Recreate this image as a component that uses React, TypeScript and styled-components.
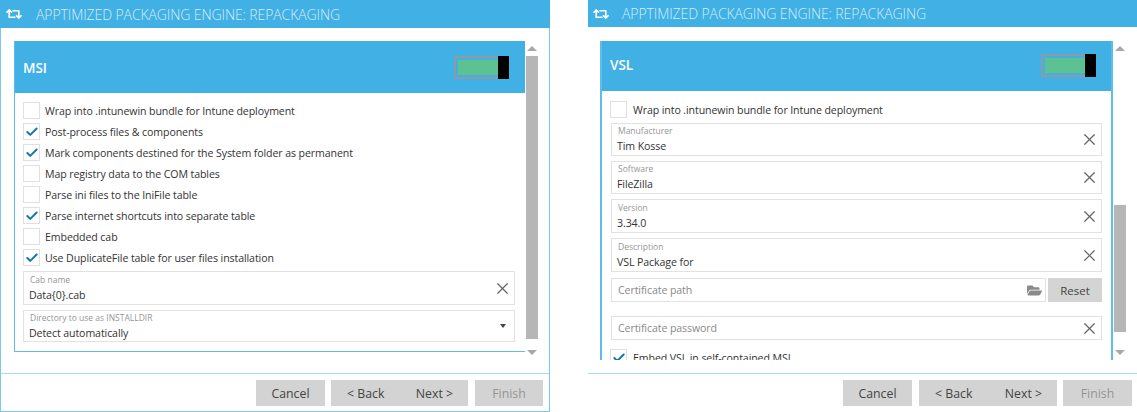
import styled, { createGlobalStyle } from 'styled-components';
import { Check, X } from 'lucide-react';
import { FaFolderOpen, FaRetweet } from 'react-icons/fa';

const BLUE = '#41b0e4';

const GlobalStyle = createGlobalStyle`
  html, body {
    margin: 0;
    background: #fff;
  }
  body {
    font-family: "Open Sans", "Noto Sans", sans-serif;
    color: #333;
  }
`;

const Page = styled.div`
  width: 1137px;
  height: 412px;
  display: flex;
  justify-content: space-between;
  overflow: hidden;
`;

const Window = styled.section<{ $framed?: boolean }>`
  box-sizing: border-box;
  width: ${(p) => (p.$framed ? '550px' : '549px')};
  height: 412px;
  display: flex;
  flex-direction: column;
  border: ${(p) => (p.$framed ? '1px solid #7cc8ec' : '0')};
  border-top: 0;
`;

const TitleBar = styled.header<{ $framed?: boolean }>`
  height: ${(p) => (p.$framed ? '28px' : '27px')};
  flex: none;
  display: flex;
  align-items: center;
  gap: ${(p) => (p.$framed ? '14px' : '13px')};
  padding-left: ${(p) => (p.$framed ? '6px' : '5px')};
  background: ${BLUE};
  color: #fff;
  box-sizing: border-box;
  margin: ${(p) => (p.$framed ? '0 -1px' : '0')};
`;

const Title = styled.h1`
  margin: 0;
  font-size: 14px;
  font-weight: 300;
  color: #d6eefa;
  letter-spacing: -0.1px;
`;

const Content = styled.div<{ $framed?: boolean }>`
  flex: 1;
  min-height: 0;
  display: flex;
  align-items: flex-start;
  padding: ${(p) => (p.$framed ? '13px 0 0 13px' : '14px 0 0 12px')};
`;

const Panel = styled.div<{ $framed?: boolean }>`
  box-sizing: border-box;
  width: ${(p) => (p.$framed ? '511px' : '513px')};
  height: ${(p) => (p.$framed ? '311px' : '319px')};
  flex: none;
  overflow: hidden;
  border: solid #5dbcea;
  border-width: ${(p) => (p.$framed ? '0 0 1px 1px' : '0 2px 0 2px')};
`;

const PanelHead = styled.div<{ $framed?: boolean }>`
  height: ${(p) => (p.$framed ? '52px' : '50px')};
  margin: 0 ${(p) => (p.$framed ? '0' : '-2px')} 0 ${(p) => (p.$framed ? '-1px' : '-2px')};
  display: flex;
  align-items: center;
  justify-content: space-between;
  padding: 0 ${(p) => (p.$framed ? '16px 0 9px' : '17px 2px 10px')};
  background: ${BLUE};
  box-sizing: border-box;
`;

const PanelName = styled.h2<{ $framed?: boolean }>`
  margin: ${(p) => (p.$framed ? '2px 0 0' : '0')};
  font-size: 13.5px;
  font-weight: 600;
  color: #fff;
`;

const Toggle = styled.div`
  display: flex;
  height: 23px;
`;

const ToggleTrack = styled.div`
  box-sizing: border-box;
  width: 44px;
  border: 2px solid #8f9ba3;
  border-right: 0;
  padding: 2px 0 2px 2px;
  display: flex;
`;

const ToggleFill = styled.div`
  flex: 1;
  background: #5cc292;
`;

const ToggleKnob = styled.div`
  width: 11px;
  background: #000;
`;

const PanelBody = styled.div<{ $framed?: boolean }>`
  display: flex;
  flex-direction: column;
  padding: ${(p) => (p.$framed ? '9px 10px 0 8px' : '10px 9px 0 9px')};
`;

const CheckRow = styled.label<{ $gap: number; $nudged?: boolean }>`
  display: flex;
  align-items: center;
  gap: ${(p) => (p.$nudged ? '6px' : '5px')};
  height: 17px;
  margin-bottom: ${(p) => p.$gap}px;
  margin-left: ${(p) => (p.$nudged ? '-1px' : '0')};
  font-size: 10.6px;
  letter-spacing: -0.1px;
  color: #333;
  white-space: nowrap;
`;

const Box = styled.span`
  box-sizing: border-box;
  width: 17px;
  height: 17px;
  flex: none;
  display: flex;
  align-items: center;
  justify-content: center;
  border: 1px solid #e0e0e0;
  color: #1577a8;
`;

const Field = styled.div<{ $height: number; $gap: number }>`
  box-sizing: border-box;
  height: ${(p) => p.$height}px;
  margin-bottom: ${(p) => p.$gap}px;
  flex: none;
  display: flex;
  align-items: center;
  justify-content: space-between;
  padding: 0 2px 0 5px;
  border: 1px solid #e2e2e2;
  min-width: 0;
`;

const FieldText = styled.div`
  display: flex;
  flex-direction: column;
  min-width: 0;
`;

const FieldLabel = styled.span`
  font-size: 8.5px;
  line-height: 13px;
  margin-left: 1px;
  color: #969696;
`;

const FieldValue = styled.span`
  font-size: 10.6px;
  letter-spacing: -0.1px;
  line-height: 18px;
  color: #333;
`;

const Placeholder = styled.span`
  font-size: 10.6px;
  letter-spacing: -0.1px;
  color: #8a8a8a;
  padding-left: 1px;
`;

const ClearIcon = styled(X)`
  flex: none;
  color: #666;
`;

const Caret = styled.span`
  width: 0;
  height: 0;
  margin-right: 6px;
  border: 3.5px solid transparent;
  border-top: 4px solid #444;
  border-bottom: 0;
`;

const CertRow = styled.div`
  display: flex;
  gap: 2px;
  margin-bottom: 14px;
`;

const CertPath = styled(Field)`
  flex: 1;
  margin-bottom: 0;
  padding-right: 3px;
  color: #8a8a8a;
`;

const ResetButton = styled.button`
  width: 54px;
  height: 24px;
  flex: none;
  padding: 0;
  border: 0;
  background: #d4d4d4;
  font: inherit;
  font-size: 11.5px;
  color: #444;
`;

const Scrollbar = styled.div`
  width: 12px;
  height: 314px;
  flex: none;
  margin-left: 1px;
  display: flex;
  flex-direction: column;
  align-items: center;
`;

const Arrow = styled.span<{ $down?: boolean }>`
  width: 0;
  height: 0;
  flex: none;
  margin-top: ${(p) => (p.$down ? 'auto' : '5px')};
  border: 5px solid transparent;
  ${(p) =>
    p.$down
      ? 'border-top: 5px solid #a8a8a8; border-bottom: 0;'
      : 'border-bottom: 5px solid #a8a8a8; border-top: 0;'}
`;

const Thumb = styled.div<{ $offset: number; $length: number }>`
  width: 100%;
  height: ${(p) => p.$length}px;
  flex: none;
  margin-top: ${(p) => p.$offset}px;
  background: #b6b6b6;
`;

const Footer = styled.footer<{ $framed?: boolean }>`
  box-sizing: border-box;
  height: ${(p) => (p.$framed ? '38px' : '39px')};
  flex: none;
  display: flex;
  justify-content: flex-end;
  padding: 6px ${(p) => (p.$framed ? '6px' : '5px')} 0 0;
  border-top: 1px solid #9edcf7;
`;

const Button = styled.button<{ $width: number; $disabled?: boolean }>`
  box-sizing: border-box;
  width: ${(p) => p.$width}px;
  height: 26px;
  padding: 0;
  border: 0;
  background: #d3d3d3;
  font: inherit;
  font-size: 12.3px;
  color: ${(p) => (p.$disabled ? '#959595' : '#444')};
`;

const StepButton = styled(Button)<{ $framed?: boolean }>`
  display: flex;
  align-items: center;
  justify-content: space-between;
  padding: 0 15px 0 16px;
  margin: 0 ${(p) => (p.$framed ? '7px 0 6px' : '6px 0 7px')};
`;

type Option = { text: string; checked: boolean };

const msiOptions: Option[] = [
  { text: 'Wrap into .intunewin bundle for Intune deployment', checked: false },
  { text: 'Post-process files & components', checked: true },
  { text: 'Mark components destined for the System folder as permanent', checked: true },
  { text: 'Map registry data to the COM tables', checked: false },
  { text: 'Parse ini files to the IniFile table', checked: false },
  { text: 'Parse internet shortcuts into separate table', checked: true },
  { text: 'Embedded cab', checked: false },
  { text: 'Use DuplicateFile table for user files installation', checked: true },
];

const vslFields = [
  { label: 'Manufacturer', value: 'Tim Kosse', height: 33 },
  { label: 'Software', value: 'FileZilla', height: 33 },
  { label: 'Version', value: '3.34.0', height: 34 },
  { label: 'Description', value: 'VSL Package for', height: 34 },
];

const CheckOption = ({
  text,
  checked,
  gap,
  nudged,
}: Option & { gap: number; nudged?: boolean }) => (
  <CheckRow $gap={gap} $nudged={nudged}>
    <Box>{checked && <Check size={14} strokeWidth={3.4} />}</Box>
    {text}
  </CheckRow>
);

const WindowBar = ({ framed }: { framed?: boolean }) => (
  <TitleBar $framed={framed}>
    <FaRetweet size={16} />
    <Title>APPTIMIZED PACKAGING ENGINE: REPACKAGING</Title>
  </TitleBar>
);

const PanelHeader = ({ name, framed }: { name: string; framed?: boolean }) => (
  <PanelHead $framed={framed}>
    <PanelName $framed={framed}>{name}</PanelName>
    <Toggle>
      <ToggleTrack>
        <ToggleFill />
      </ToggleTrack>
      <ToggleKnob />
    </Toggle>
  </PanelHead>
);

const WizardButtons = ({ framed }: { framed?: boolean }) => (
  <Footer $framed={framed}>
    <Button $width={69}>Cancel</Button>
    <StepButton $width={framed ? 137 : 138} $framed={framed}>
      <span>&lt; Back</span>
      <span>Next &gt;</span>
    </StepButton>
    <Button $width={framed ? 68 : 69} $disabled>
      Finish
    </Button>
  </Footer>
);

const App = () => {
  return (
    <Page>
      <GlobalStyle />
      <Window $framed>
        <WindowBar framed />
        <Content $framed>
          <Panel $framed>
            <PanelHeader name="MSI" framed />
            <PanelBody $framed>
              {msiOptions.map((option, i) => (
                <CheckOption key={option.text} {...option} gap={i === 7 ? 5 : 4} />
              ))}
              <Field $height={34} $gap={5}>
                <FieldText>
                  <FieldLabel>Cab name</FieldLabel>
                  <FieldValue>Data{'{0}'}.cab</FieldValue>
                </FieldText>
                <ClearIcon size={19} strokeWidth={1.5} />
              </Field>
              <Field $height={32} $gap={0}>
                <FieldText>
                  <FieldLabel>Directory to use as INSTALLDIR</FieldLabel>
                  <FieldValue>Detect automatically</FieldValue>
                </FieldText>
                <Caret />
              </Field>
            </PanelBody>
          </Panel>
          <Scrollbar>
            <Arrow />
            <Thumb $offset={5} $length={283} />
            <Arrow $down />
          </Scrollbar>
        </Content>
        <WizardButtons framed />
      </Window>

      <Window>
        <WindowBar />
        <Content>
          <Panel>
            <PanelHeader name="VSL" />
            <PanelBody>
              <CheckOption
                text="Wrap into .intunewin bundle for Intune deployment"
                checked={false}
                gap={5}
                nudged
              />
              {vslFields.map((field, i) => (
                <Field key={field.label} $height={field.height} $gap={i === 3 ? 6 : 5}>
                  <FieldText>
                    <FieldLabel>{field.label}</FieldLabel>
                    <FieldValue>{field.value}</FieldValue>
                  </FieldText>
                  <ClearIcon size={19} strokeWidth={1.5} />
                </Field>
              ))}
              <CertRow>
                <CertPath $height={24} $gap={0}>
                  <Placeholder>Certificate path</Placeholder>
                  <FaFolderOpen size={15} />
                </CertPath>
                <ResetButton>Reset</ResetButton>
              </CertRow>
              <Field $height={24} $gap={9}>
                <Placeholder>Certificate password</Placeholder>
                <ClearIcon size={19} strokeWidth={1.5} />
              </Field>
              <CheckOption
                text="Embed VSL in self-contained MSI"
                checked
                gap={0}
                nudged
              />
            </PanelBody>
          </Panel>
          <Scrollbar>
            <Arrow />
            <Thumb $offset={154} $length={127} />
            <Arrow $down />
          </Scrollbar>
        </Content>
        <WizardButtons />
      </Window>
    </Page>
  );
};

export default App;
